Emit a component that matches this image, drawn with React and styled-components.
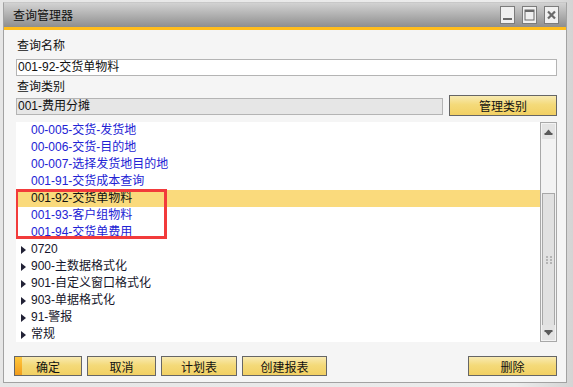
import React from "react";
import styled, { createGlobalStyle } from "styled-components";

const GlobalStyle = createGlobalStyle`
  html, body {
    margin: 0;
    padding: 0;
    background: #ffffff;
  }
  * {
    box-sizing: border-box;
  }
  body {
    font-family: "Liberation Sans", "Noto Sans CJK SC", sans-serif;
    font-size: 12px;
    color: #111;
  }
`;

const items = [
  { label: "00-005-交货-发货地" },
  { label: "00-006-交货-目的地" },
  { label: "00-007-选择发货地目的地" },
  { label: "001-91-交货成本查询" },
  { label: "001-92-交货单物料", selected: true },
  { label: "001-93-客户组物料" },
  { label: "001-94-交货单费用" },
  { label: "0720", group: true },
  { label: "900-主数据格式化", group: true },
  { label: "901-自定义窗口格式化", group: true },
  { label: "903-单据格式化", group: true },
  { label: "91-警报", group: true },
  { label: "常规", group: true },
];

const Window = styled.div`
  width: 573px;
  height: 387px;
  padding: 2px 6px 4px 3px;
  background: linear-gradient(to right, #e6e6e6, #ececec 90%, #d4d4d4);
`;

const Frame = styled.div`
  height: 100%;
  display: flex;
  flex-direction: column;
  border: 1px solid #a2a2a2;
  border-top-color: #c8c8c8;
`;

const TitleBar = styled.div`
  height: 24px;
  display: flex;
  align-items: center;
  padding: 0 7px 0 9px;
  background: linear-gradient(to bottom, #d2d2d2, #b4b4b4 45%, #8e8e8e);
`;

const Title = styled.div`
  flex: 1;
  font-size: 12px;
  color: #111;
  padding-bottom: 1px;
`;

const WinButtons = styled.div`
  display: flex;
  gap: 7px;
`;

const WinButton = styled.div`
  width: 15px;
  height: 18px;
  display: flex;
  align-items: center;
  justify-content: center;
  background: #f0f0f0;
  border: 1px solid #7c7c7c;
`;

const Stripe = styled.div`
  height: 3px;
  background: #ffbd1c;
`;

const Body = styled.div`
  flex: 1;
  display: flex;
  flex-direction: column;
  padding: 8px 9px 0 12px;
  background: #f5f5f5;
`;

const Label = styled.div`
  line-height: 16px;
  height: 16px;
  padding-left: 1px;
  margin-top: ${(p) => p.$top || 0}px;
  margin-bottom: ${(p) => p.$gap || 0}px;
`;

const Field = styled.div`
  height: 17px;
  line-height: 15px;
  padding-left: 1px;
  border: 1px solid #b4b4b4;
  background: ${(p) => (p.$readonly ? "#e6e6e6" : "#ffffff")};
  color: #111;
  white-space: nowrap;
`;

const CategoryRow = styled.div`
  display: flex;
  align-items: center;
  gap: 6px;
  height: 21px;
  margin-top: 0px;
`;

const Grow = styled.div`
  flex: 1;
  margin-top: 2px;
`;

const Button = styled.div`
  position: relative;
  width: ${(p) => p.$w}px;
  height: ${(p) => p.$h || 20}px;
  display: flex;
  align-items: center;
  justify-content: center;
  border: 1px solid #666666;
  background: linear-gradient(to bottom, #f8eab2, #f4da7a 45%, #f2d063);
  color: #111;
  font-size: 12px;
  white-space: nowrap;
  overflow: hidden;
`;

const DefaultMark = styled.span`
  position: absolute;
  left: 0;
  top: 0;
  bottom: 0;
  width: 7px;
  background: linear-gradient(to bottom, #ffc83c, #f29c1c);
`;

const ListArea = styled.div`
  margin-top: 6px;
  height: 220px;
  display: flex;
  background: #ffffff;
`;

const Tree = styled.div`
  position: relative;
  flex: 1;
  overflow: hidden;
`;

const Row = styled.div`
  height: 17px;
  line-height: 17px;
  display: flex;
  align-items: center;
  padding-left: 5px;
  background: ${(p) => (p.$selected ? "#fada7c" : "transparent")};
  color: ${(p) => (p.$selected ? "#111" : p.$group ? "#15152a" : "#2222d4")};
  white-space: nowrap;
`;

const Caret = styled.span`
  width: 10px;
  display: inline-flex;
  align-items: center;
`;

const Highlight = styled.div`
  position: absolute;
  left: -1px;
  top: 67px;
  width: 152px;
  height: 50px;
  border: 3px solid #f23b3b;
  pointer-events: none;
`;

const ScrollBar = styled.div`
  width: 17px;
  display: flex;
  flex-direction: column;
  padding: 1px;
  border: 1px solid #a8a8a8;
  background: #f3f3f3;
`;

const ScrollArrow = styled.div`
  height: 15px;
  display: flex;
  align-items: center;
  justify-content: center;
  background: #e3e3e3;
`;

const Track = styled.div`
  flex: 1;
  display: flex;
  flex-direction: column;
  padding-top: 54px;
`;

const Thumb = styled.div`
  flex: 1;
  display: flex;
  align-items: center;
  justify-content: center;
  background: #e1e1e1;
  border: 1px solid #a8a8a8;
  border-bottom: none;
`;

const Footer = styled.div`
  display: flex;
  gap: 5px;
  margin: 14px 0 0 -2px;
`;

const Spacer = styled.div`
  flex: 1;
`;

function TriangleRight() {
  return (
    <svg width="5" height="8" viewBox="0 0 5 8">
      <path d="M0 0 L5 4 L0 8 Z" fill="#222236" />
    </svg>
  );
}

function ArrowUp() {
  return (
    <svg width="9" height="6" viewBox="0 0 9 6">
      <path d="M1.5 4 L4.5 0.5 L7.5 4 Z" fill="#5a5a5a" />
      <rect x="0.5" y="4" width="8" height="2" fill="#5a5a5a" />
    </svg>
  );
}

function ArrowDown() {
  return (
    <svg width="9" height="6" viewBox="0 0 9 6">
      <rect x="0.5" y="0" width="8" height="2" fill="#5a5a5a" />
      <path d="M1.5 2 L4.5 5.5 L7.5 2 Z" fill="#5a5a5a" />
    </svg>
  );
}

function Grip() {
  return (
    <svg width="6" height="8" viewBox="0 0 6 8">
      {[0, 3, 6].map((y) =>
        [0, 4].map((x) => (
          <rect key={`${x}-${y}`} x={x} y={y} width="2" height="2" fill="#b4b4b4" />
        ))
      )}
    </svg>
  );
}

function MinIcon() {
  return (
    <svg width="11" height="12" viewBox="0 0 11 12">
      <rect x="1" y="9" width="9" height="2" fill="#6a6a6a" />
    </svg>
  );
}

function MaxIcon() {
  return (
    <svg width="11" height="12" viewBox="0 0 11 12">
      <rect x="1" y="1" width="9" height="10" fill="none" stroke="#6a6a6a" strokeWidth="1" />
      <rect x="1" y="1" width="9" height="2" fill="#6a6a6a" />
    </svg>
  );
}

function CloseIcon() {
  return (
    <svg width="11" height="12" viewBox="0 0 11 12">
      <path d="M2 2.5 L9 9.5 M9 2.5 L2 9.5" stroke="#6a6a6a" strokeWidth="2.2" />
    </svg>
  );
}

export default function App() {
  return (
    <>
      <GlobalStyle />
      <Window>
        <Frame>
          <TitleBar>
            <Title>查询管理器</Title>
            <WinButtons>
              <WinButton>
                <MinIcon />
              </WinButton>
              <WinButton>
                <MaxIcon />
              </WinButton>
              <WinButton>
                <CloseIcon />
              </WinButton>
            </WinButtons>
          </TitleBar>
          <Stripe />
          <Body>
            <Label $gap={5}>查询名称</Label>
            <Field>001-92-交货单物料</Field>
            <Label $top={3}>查询类别</Label>
            <CategoryRow>
              <Grow>
                <Field $readonly>001-费用分摊</Field>
              </Grow>
              <Button $w={108} $h={21}>
                管理类别
              </Button>
            </CategoryRow>
            <ListArea>
              <Tree>
                {items.map((item) => (
                  <Row key={item.label} $selected={item.selected} $group={item.group}>
                    <Caret>{item.group ? <TriangleRight /> : null}</Caret>
                    {item.label}
                  </Row>
                ))}
                <Highlight />
              </Tree>
              <ScrollBar>
                <ScrollArrow>
                  <ArrowUp />
                </ScrollArrow>
                <Track>
                  <Thumb>
                    <Grip />
                  </Thumb>
                  <ScrollArrow>
                    <ArrowDown />
                  </ScrollArrow>
                </Track>
              </ScrollBar>
            </ListArea>
            <Footer>
              <Button $w={68}>
                <DefaultMark />
                确定
              </Button>
              <Button $w={69}>取消</Button>
              <Button $w={76}>计划表</Button>
              <Button $w={85}>创建报表</Button>
              <Spacer />
              <Button $w={89}>删除</Button>
            </Footer>
          </Body>
        </Frame>
      </Window>
    </>
  );
}
